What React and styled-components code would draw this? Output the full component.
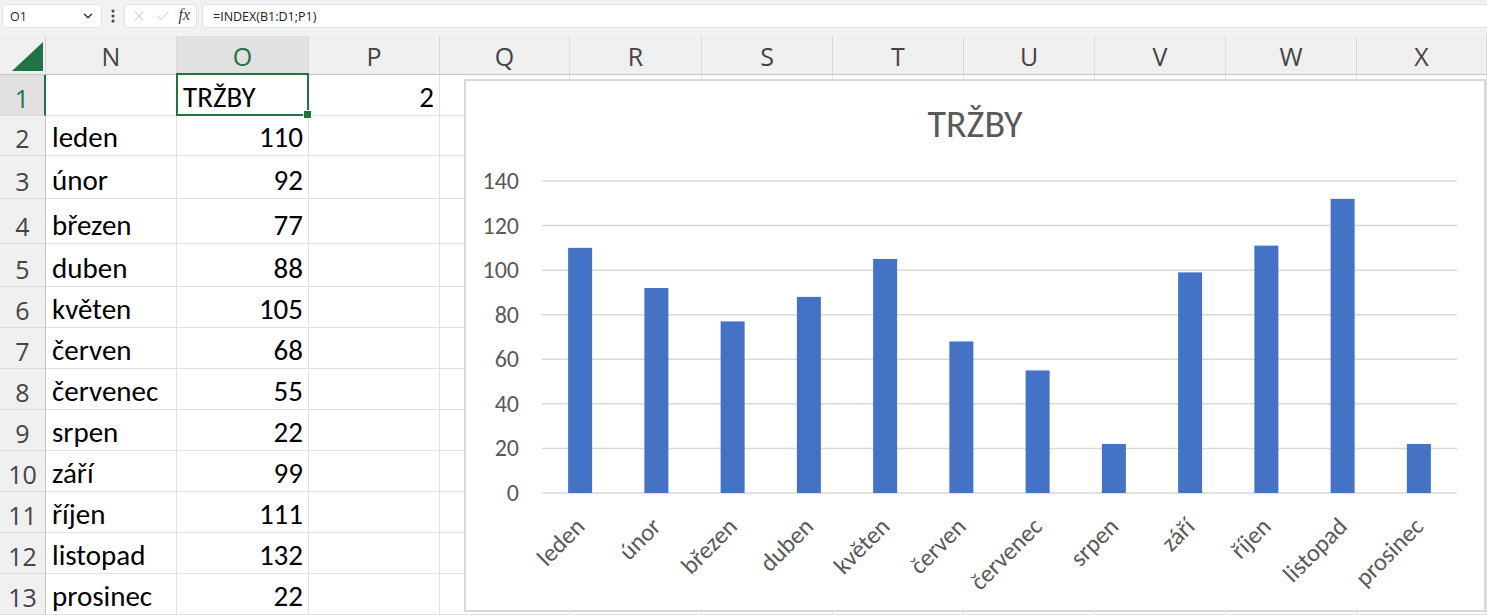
import React from 'react';
import styled, { createGlobalStyle } from 'styled-components';
import { X, Check, ChevronDown } from 'lucide-react';

const GlobalStyle = createGlobalStyle`
  * { box-sizing: border-box; }
  body {
    margin: 0;
    overflow: hidden;
    background: #fff;
  }
`;

const COLS = '46px 131px 132px 131px 130px 132px 131px 131px 131px 131px 131px 130px';
const CELL_FONT = "Carlito, Lato, 'Liberation Sans', sans-serif";
const UI_FONT = "'Open Sans', 'Noto Sans', sans-serif";

const months = [
  ['leden', 110], ['únor', 92], ['březen', 77], ['duben', 88],
  ['květen', 105], ['červen', 68], ['červenec', 55], ['srpen', 22],
  ['září', 99], ['říjen', 111], ['listopad', 132], ['prosinec', 22],
];
const rowHeights = [41, 40, 43, 45, 43, 41, 41, 41, 41, 41, 41, 41, 41];
const letters = ['N', 'O', 'P', 'Q', 'R', 'S', 'T', 'U', 'V', 'W', 'X'];

const Page = styled.div`
  position: relative;
  width: 1487px;
  height: 615px;
  overflow: hidden;
  background: #fff;
`;

/* formula bar */
const FormulaBar = styled.div`
  display: flex;
  align-items: center;
  height: 36px;
  padding: 0 0 4px 2px;
  background: #f0f2f4;
  font-family: ${UI_FONT};
  font-size: 12.5px;
  color: #222;
`;

const Box = styled.div`
  display: flex;
  align-items: center;
  height: 24px;
  background: #fff;
  border: 1px solid #e0e0e0;
  border-radius: 4px;
`;

const NameBox = styled(Box)`
  width: 100px;
  padding: 0 6px 0 7px;
  justify-content: space-between;
  color: #1f1f1f;
`;

const Dots = styled.div`
  width: 22px;
  display: flex;
  justify-content: center;
`;

const ActionBox = styled(Box)`
  width: 73px;
  padding: 0 6px;
  justify-content: space-between;
  color: #b8b8b8;
`;

const Fx = styled.span`
  font-family: 'Liberation Serif', serif;
  font-style: italic;
  font-size: 16px;
  color: #3c3c3c;
  margin-top: -3px;
`;

const FormulaInput = styled(Box)`
  flex: 1;
  margin-left: 5px;
  padding-left: 10px;
  border-right: none;
  border-radius: 4px 0 0 4px;
`;

/* grid */
const HeaderRow = styled.div`
  display: grid;
  grid-template-columns: ${COLS};
  height: 39px;
  background: #f0f0f0;
  border-bottom: 1px solid #c4c4c4;
  font-family: ${UI_FONT};
  font-size: 25px;
  color: #444;
`;

const Corner = styled.div`
  position: relative;
  border-right: 1px solid #d4d4d4;
`;

const ColHeader = styled.div`
  display: flex;
  align-items: center;
  justify-content: center;
  border-right: 1px solid #dadada;
  background: ${p => (p.$selected ? '#e1e1e1' : 'transparent')};
  color: ${p => (p.$selected ? '#217346' : '#444')};
  padding-top: 1px;
`;

const Row = styled.div`
  display: grid;
  grid-template-columns: ${COLS};
  height: ${p => p.$h}px;
`;

const RowHeader = styled.div`
  display: flex;
  align-items: flex-end;
  justify-content: center;
  padding-bottom: 4px;
  background: ${p => (p.$selected ? '#e1e1e1' : '#f0f0f0')};
  border-right: ${p => (p.$selected ? '2px solid #217346' : '1px solid #c4c4c4')};
  border-bottom: 1px solid #dadada;
  font-family: ${UI_FONT};
  font-size: 25px;
  line-height: 1;
  color: ${p => (p.$selected ? '#217346' : '#444')};
`;

const Cell = styled.div`
  position: relative;
  display: flex;
  align-items: flex-end;
  justify-content: ${p => (p.$right ? 'flex-end' : 'flex-start')};
  padding: 0 5px 3px 6px;
  border-right: 1px solid #e1e1e1;
  border-bottom: 1px solid #e1e1e1;
  font-family: ${CELL_FONT};
  font-size: 29px;
  line-height: 1;
  color: #000;
  white-space: nowrap;

  ${p => p.$active && `
    &::after {
      content: '';
      position: absolute;
      top: -2px;
      left: -1px;
      right: -1px;
      bottom: -1px;
      border: 2px solid #217346;
    }
    &::before {
      content: '';
      position: absolute;
      right: -4px;
      bottom: -4px;
      width: 7px;
      height: 7px;
      background: #217346;
      border: 1px solid #fff;
      z-index: 2;
    }
  `}
`;

/* chart */
const Chart = styled.div`
  position: absolute;
  left: 464px;
  top: 79px;
  width: 1022px;
  height: 533px;
  background: #fff;
  border: 2px solid #d9d9d9;
`;

const X0 = 76;
const X1 = 991;
const Y0 = 412;
const STEP = 312 / 7;
const SLOT = (X1 - X0) / 12;

const ChartSvg = () => (
  <svg width="1018" height="529" viewBox="0 0 1018 529">
    <text x="509" y="56" textAnchor="middle" fontFamily={CELL_FONT} fontSize="38" fill="#595959">TRŽBY</text>
    {[0, 1, 2, 3, 4, 5, 6, 7].map(i => {
      const y = Y0 - i * STEP;
      return (
        <g key={i}>
          <line x1={X0} x2={X1} y1={y} y2={y} stroke="#d9d9d9" strokeWidth="1.5" />
          <text x="53" y={y + 8} textAnchor="end" fontFamily={CELL_FONT} fontSize="24" fill="#595959">{i * 20}</text>
        </g>
      );
    })}
    {months.map(([m, v], i) => {
      const cx = X0 + SLOT * (i + 0.5);
      const h = (v / 140) * 312;
      return (
        <g key={m}>
          <rect x={cx - 12} y={Y0 - h} width="24" height={h} fill="#4472c4" />
          <text
            transform={`translate(${cx + 6} 447) rotate(-45)`}
            textAnchor="end"
            fontFamily={CELL_FONT}
            fontSize="24.5"
            fill="#595959"
          >
            {m}
          </text>
        </g>
      );
    })}
  </svg>
);

export default function App() {
  return (
    <Page>
      <GlobalStyle />
      <FormulaBar>
        <NameBox>
          <span>O1</span>
          <ChevronDown size={14} strokeWidth={2.4} color="#333" />
        </NameBox>
        <Dots>
          <svg width="4" height="14" viewBox="0 0 4 14">
            <circle cx="2" cy="2" r="1.5" fill="#444" />
            <circle cx="2" cy="7" r="1.5" fill="#444" />
            <circle cx="2" cy="12" r="1.5" fill="#444" />
          </svg>
        </Dots>
        <ActionBox>
          <X size={16} strokeWidth={1.2} />
          <Check size={16} strokeWidth={1.2} />
          <Fx>fx</Fx>
        </ActionBox>
        <FormulaInput>=INDEX(B1:D1;P1)</FormulaInput>
      </FormulaBar>

      <HeaderRow>
        <Corner>
          <svg width="46" height="39" viewBox="0 0 46 39" style={{ position: 'absolute', left: 0, top: 0 }}>
            <polygon points="43,6 43,35 12,35" fill="#217346" />
          </svg>
        </Corner>
        {letters.map(l => (
          <ColHeader key={l} $selected={l === 'O'}>{l}</ColHeader>
        ))}
      </HeaderRow>

      {rowHeights.map((h, r) => {
        const isFirst = r === 0;
        const month = isFirst ? null : months[r - 1];
        return (
          <Row key={r} $h={h}>
            <RowHeader $selected={isFirst}>{r + 1}</RowHeader>
            <Cell>{month ? month[0] : ''}</Cell>
            <Cell $right={!isFirst} $active={isFirst}>{isFirst ? 'TRŽBY' : month[1]}</Cell>
            <Cell $right>{isFirst ? '2' : ''}</Cell>
            {letters.slice(3).map(l => <Cell key={l} />)}
          </Row>
        );
      })}

      <Chart>
        <ChartSvg />
      </Chart>
    </Page>
  );
}
